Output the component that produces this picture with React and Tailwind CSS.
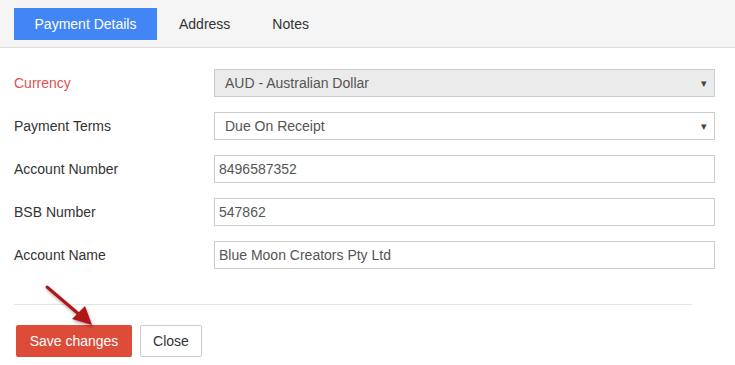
export default function App() {
  const font = { fontFamily: '"Liberation Sans", Arial, sans-serif' };
  const rows = [
    { label: "Account Number", value: "8496587352" },
    { label: "BSB Number", value: "547862" },
    { label: "Account Name", value: "Blue Moon Creators Pty Ltd" },
  ];

  return (
    <div className="w-[735px] h-[365px] bg-white text-[14px] text-[#333] relative overflow-hidden" style={font}>
      <div className="h-[48px] bg-[#f5f5f5] border-b border-[#dddddd] flex items-start pt-[8px] pl-[14px]">
        <div className="h-[32px] w-[143px] bg-[#4286f5] text-white flex items-center justify-center">Payment Details</div>
        <div className="h-[32px] px-[22px] flex items-center">Address</div>
        <div className="h-[32px] px-[20px] flex items-center">Notes</div>
      </div>

      <div className="pl-[14px] pr-[20px] pt-[21px] flex flex-col gap-[15px]">
        <div className="flex items-center h-[28px]">
          <div className="w-[200px] text-[#d9534f]">Currency</div>
          <div className="flex-1 h-[28px] border border-[#cccccc] bg-[#ebebeb] flex items-center justify-between pl-[10px] pr-[7px] text-[#555]">
            <span>AUD - Australian Dollar</span>
            <span className="text-[11px] text-[#444]">▾</span>
          </div>
        </div>
        <div className="flex items-center h-[28px]">
          <div className="w-[200px]">Payment Terms</div>
          <div className="flex-1 h-[28px] border border-[#cccccc] bg-white flex items-center justify-between pl-[10px] pr-[7px] text-[#555]">
            <span>Due On Receipt</span>
            <span className="text-[11px] text-[#444]">▾</span>
          </div>
        </div>
        {rows.map((r) => (
          <div key={r.label} className="flex items-center h-[28px]">
            <div className="w-[200px]">{r.label}</div>
            <div className="flex-1 h-[28px] border border-[#cccccc] bg-white flex items-center px-[4px] text-[#555]">
              {r.value}
            </div>
          </div>
        ))}
      </div>

      <div className="ml-[14px] w-[678px] mt-[35px] border-t border-[#e5e5e5]"></div>

      <div className="flex gap-[8px] pl-[16px] pt-[20px]">
        <button className="h-[32px] w-[116px] bg-[#dd4b39] text-white rounded-[2px] flex items-center justify-center">Save changes</button>
        <button className="h-[32px] w-[62px] bg-white border border-[#cccccc] rounded-[2px] flex items-center justify-center text-[#333]">Close</button>
      </div>

      <svg className="absolute left-[40px] top-[280px]" width="64" height="56" viewBox="0 0 64 56">
        <defs>
          <filter id="sh" x="-30%" y="-30%" width="160%" height="160%">
            <feDropShadow dx="1" dy="2" stdDeviation="1.5" floodColor="#000" floodOpacity="0.35" />
          </filter>
        </defs>
        <g filter="url(#sh)">
          <line x1="7" y1="7" x2="41" y2="36" stroke="#b01515" strokeWidth="3" strokeLinecap="round" />
          <polygon points="52,45 32,39 45,26" fill="#b01515" />
        </g>
      </svg>
    </div>
  );
}
